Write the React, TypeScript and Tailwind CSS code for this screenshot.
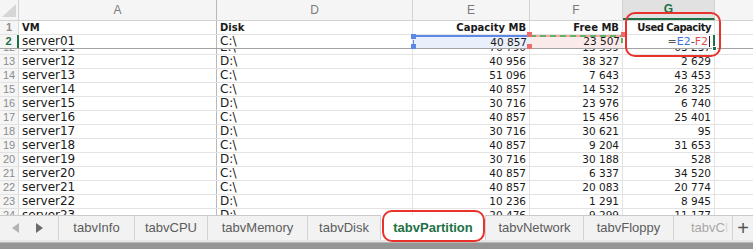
import React from "react";

// column widths: row number, A, D, E, F, G, rest
const W = ["w-[19px]", "w-[198px]", "w-[196px]", "w-[117px]", "w-[93px]", "w-[92px]", "flex-1"];

const rows: string[][] = [
  ["13", "server12", "D:\\", "40 956", "38 327", "2 629"],
  ["14", "server13", "C:\\", "51 096", "7 643", "43 453"],
  ["15", "server14", "C:\\", "40 857", "14 532", "26 325"],
  ["16", "server15", "D:\\", "30 716", "23 976", "6 740"],
  ["17", "server16", "C:\\", "40 857", "15 456", "25 401"],
  ["18", "server17", "D:\\", "30 716", "30 621", "95"],
  ["19", "server18", "C:\\", "40 857", "9 204", "31 653"],
  ["20", "server19", "D:\\", "30 716", "30 188", "528"],
  ["21", "server20", "C:\\", "40 857", "6 337", "34 520"],
  ["22", "server21", "C:\\", "40 857", "20 083", "20 774"],
  ["23", "server22", "D:\\", "10 236", "1 291", "8 945"],
  ["24", "server23", "D:\\", "20 476", "9 299", "11 177"],
];

const tabs = [
  { name: "tabvInfo", w: "w-[76px]" },
  { name: "tabvCPU", w: "w-[73px]" },
  { name: "tabvMemory", w: "w-[100px]" },
  { name: "tabvDisk", w: "w-[73px]" },
  { name: "tabvPartition", w: "w-[105px]", active: true },
  { name: "tabvNetwork", w: "w-[98px]" },
  { name: "tabvFloppy", w: "w-[90px]" },
];

const txt = "shrink-0 pl-[3px] flex items-center whitespace-nowrap overflow-hidden text-[12px]";
const num = "shrink-0 pr-[3px] flex items-center justify-end whitespace-nowrap overflow-hidden text-[10.5px]";

function RowNum({ n, active }: { n: string; active?: boolean }) {
  return (
    <div
      className={`${W[0]} shrink-0 h-full flex items-center justify-center bg-[#f5f5f5] text-[11px] font-['Liberation_Sans',sans-serif] ${
        active ? "text-[#1e7145] font-bold border-r-2 border-[#1e7145]" : "text-[#8c8c8c] border-r border-[#d8d8d8]"
      }`}
    >
      {n}
    </div>
  );
}

function DataRow({ r }: { r: string[] }) {
  return (
    <div className="flex h-[14px] shrink-0 border-b border-[#e3e3e3] leading-[13px]">
      <RowNum n={r[0]} />
      <div className={`${W[1]} ${txt} border-r border-[#b9b9b9]`}>{r[1]}</div>
      <div className={`${W[2]} ${txt} border-r border-[#e3e3e3]`}>{r[2]}</div>
      <div className={`${W[3]} ${num} border-r border-[#e3e3e3]`}>{r[3]}</div>
      <div className={`${W[4]} ${num} border-r border-[#e3e3e3]`}>{r[4]}</div>
      <div className={`${W[5]} ${num} border-r border-[#e3e3e3]`}>{r[5]}</div>
      <div className={W[6]} />
    </div>
  );
}

function Handle({ className }: { className: string }) {
  return <div className={`absolute w-[5px] h-[5px] ${className}`} />;
}

export default function App() {
  return (
    <div className="relative w-[753px] h-[249px] overflow-hidden bg-white flex flex-col font-['DejaVu_Sans',sans-serif] text-[11px] text-[#1a1a1a]">
      {/* sheet */}
      <div className="flex-1 flex flex-col overflow-hidden">
        {/* column letters */}
        <div className="flex h-[21px] shrink-0 bg-[#f5f5f5] border-b border-[#d2d2d2] text-[12px] text-[#7a7a7a] font-['Liberation_Sans',sans-serif]">
          <div className={`${W[0]} shrink-0 relative border-r border-[#d2d2d2]`}>
            <div className="absolute right-[2px] bottom-[3px] w-0 h-0 border-l-[14px] border-l-transparent border-b-[13px] border-b-[#d6d6d6]" />
          </div>
          <div className={`${W[1]} shrink-0 flex items-center justify-center border-r border-[#b9b9b9]`}>A</div>
          <div className={`${W[2]} shrink-0 flex items-center justify-center border-r border-[#d2d2d2]`}>D</div>
          <div className={`${W[3]} shrink-0 flex items-center justify-center border-r border-[#d2d2d2]`}>E</div>
          <div className={`${W[4]} shrink-0 flex items-center justify-center border-r border-[#d2d2d2]`}>F</div>
          <div className={`${W[5]} shrink-0 flex items-center justify-center border-r border-[#d2d2d2] bg-[#e1e1e1] text-[#1e7145] font-bold border-b-2 border-b-[#1e7145]`}>G</div>
          <div className={W[6]} />
        </div>

        {/* row 1: headings */}
        <div className="flex h-[14px] shrink-0 border-b border-[#e3e3e3] leading-[13px] font-bold text-[10px]">
          <RowNum n="1" />
          <div className={`${W[1]} shrink-0 pl-[3px] flex items-center border-r border-[#b9b9b9]`}>VM</div>
          <div className={`${W[2]} shrink-0 pl-[3px] flex items-center border-r border-[#e3e3e3]`}>Disk</div>
          <div className={`${W[3]} shrink-0 pr-[3px] flex items-center justify-end whitespace-nowrap border-r border-[#e3e3e3]`}>Capacity MB</div>
          <div className={`${W[4]} shrink-0 pr-[3px] flex items-center justify-end whitespace-nowrap border-r border-[#e3e3e3]`}>Free MB</div>
          <div className={`${W[5]} shrink-0 pr-[3px] flex items-center justify-end whitespace-nowrap tracking-[-0.5px] border-r border-[#e3e3e3]`}>Used Capacity</div>
          <div className={W[6]} />
        </div>

        {/* row 2: frozen, active row */}
        <div className="flex h-[13px] shrink-0 leading-[13px]">
          <RowNum n="2" active />
          <div className={`${W[1]} ${txt} border-r border-[#b9b9b9]`}>server01</div>
          <div className={`${W[2]} ${txt} border-r border-[#e3e3e3]`}>C:\</div>
          <div className={`${W[3]} shrink-0 relative pr-[3px] flex items-center justify-end text-[10.5px] bg-[#e9effb] border-t-2 border-[#5a8ae6]`}>
            40 857
            <Handle className="left-[-2px] top-[-3px] bg-[#5a8ae6]" />
            <Handle className="left-[-2px] bottom-[-1px] bg-[#5a8ae6]" />
            <div className="absolute left-0 top-[3px] w-[1px] h-[6px] bg-[#5a8ae6]" />
          </div>
          <div className={`${W[4]} shrink-0 relative pr-[3px] flex items-center justify-end text-[10.5px] bg-[#fbeaea]`}>
            <div className="absolute left-0 right-0 top-0 h-[2px] bg-[repeating-linear-gradient(90deg,#63b063_0_6px,#f3a7a7_6px_10px)]" />
            23 507
            <Handle className="left-[-3px] top-[-3px] bg-[#ee6b6b]" />
            <Handle className="left-[-3px] bottom-[-1px] bg-[#ee6b6b]" />
            <Handle className="right-[-3px] top-[-3px] bg-[#ee6b6b]" />
            <div className="absolute right-0 top-[3px] w-[2px] h-[5px] bg-[#63b063]" />
          </div>
          <div className={`${W[5]} shrink-0 relative pr-[3px] flex items-center justify-end text-[11px] whitespace-nowrap border-r-2 border-[#1e7145]`}>
            <span className="text-[#555]">=</span>
            <span className="text-[#3d72dc]">E2</span>
            <span className="text-[#444]">-</span>
            <span className="text-[#e24c4c]">F2</span>
            <span className="ml-[1px] w-[1px] h-[11px] bg-[#222]" />
            <div className="absolute right-[-4px] bottom-[-3px] w-[5px] h-[5px] bg-[#1e7145] border border-white" />
          </div>
          <div className={W[6]} />
        </div>
        <div className="h-[1px] shrink-0 bg-[#a3a3a3]" />

        {/* row 12, scrolled mostly out of view */}
        <div className="h-[6px] shrink-0 overflow-hidden flex flex-col justify-end">
          <DataRow r={["12", "server11", "E:\\", "76 790", "13 559", "63 237"]} />
        </div>

        {rows.map((r) => (
          <DataRow key={r[0]} r={r} />
        ))}
      </div>

      {/* sheet tabs */}
      <div className="flex h-[25px] shrink-0 bg-[#f2f2f2] border-t border-[#c9c9c9] font-['Liberation_Sans',sans-serif] text-[13px] text-[#5c5c5c]">
        <div className="w-[58px] shrink-0 flex items-center pl-[12px] gap-[17px]">
          <svg width="7" height="10" viewBox="0 0 7 10">
            <path d="M7 0 L0 5 L7 10 Z" fill="#b3b3b3" />
          </svg>
          <svg width="7" height="10" viewBox="0 0 7 10">
            <path d="M0 0 L7 5 L0 10 Z" fill="#6b6b6b" />
          </svg>
        </div>
        {tabs.map((t) => (
          <div
            key={t.name}
            className={`${t.w} shrink-0 flex items-center justify-center border-l border-[#d3d3d3] ${
              t.active ? "bg-white text-[#1e7145] font-bold -mt-[1px]" : ""
            }`}
          >
            {t.name}
          </div>
        ))}
        <div className="w-[59px] shrink-0 flex items-center pl-[17px] border-l border-[#d3d3d3] overflow-hidden whitespace-nowrap">
          <span className="text-[#a8a8a8]">tabvC</span>
          <span className="text-[#d8d8d8]">l</span>
        </div>
        <div className="flex-1 flex items-center justify-center border-l border-[#d3d3d3] text-[20px] font-light text-[#555] leading-none">+</div>
      </div>
      <div className="h-[2px] shrink-0 bg-[#e6e6e6]" />
      <div className="h-[7px] shrink-0 bg-[#959595] border-t border-[#b8b8b8]" />

      {/* red callouts */}
      <div className="absolute left-[625px] top-[12px] w-[96px] h-[45px] border-2 border-[#e8322c] rounded-[10px]" />
      <div className="absolute left-[382px] top-[210px] w-[103px] h-[32px] border-2 border-[#e8322c] rounded-[10px]" />
    </div>
  );
}
